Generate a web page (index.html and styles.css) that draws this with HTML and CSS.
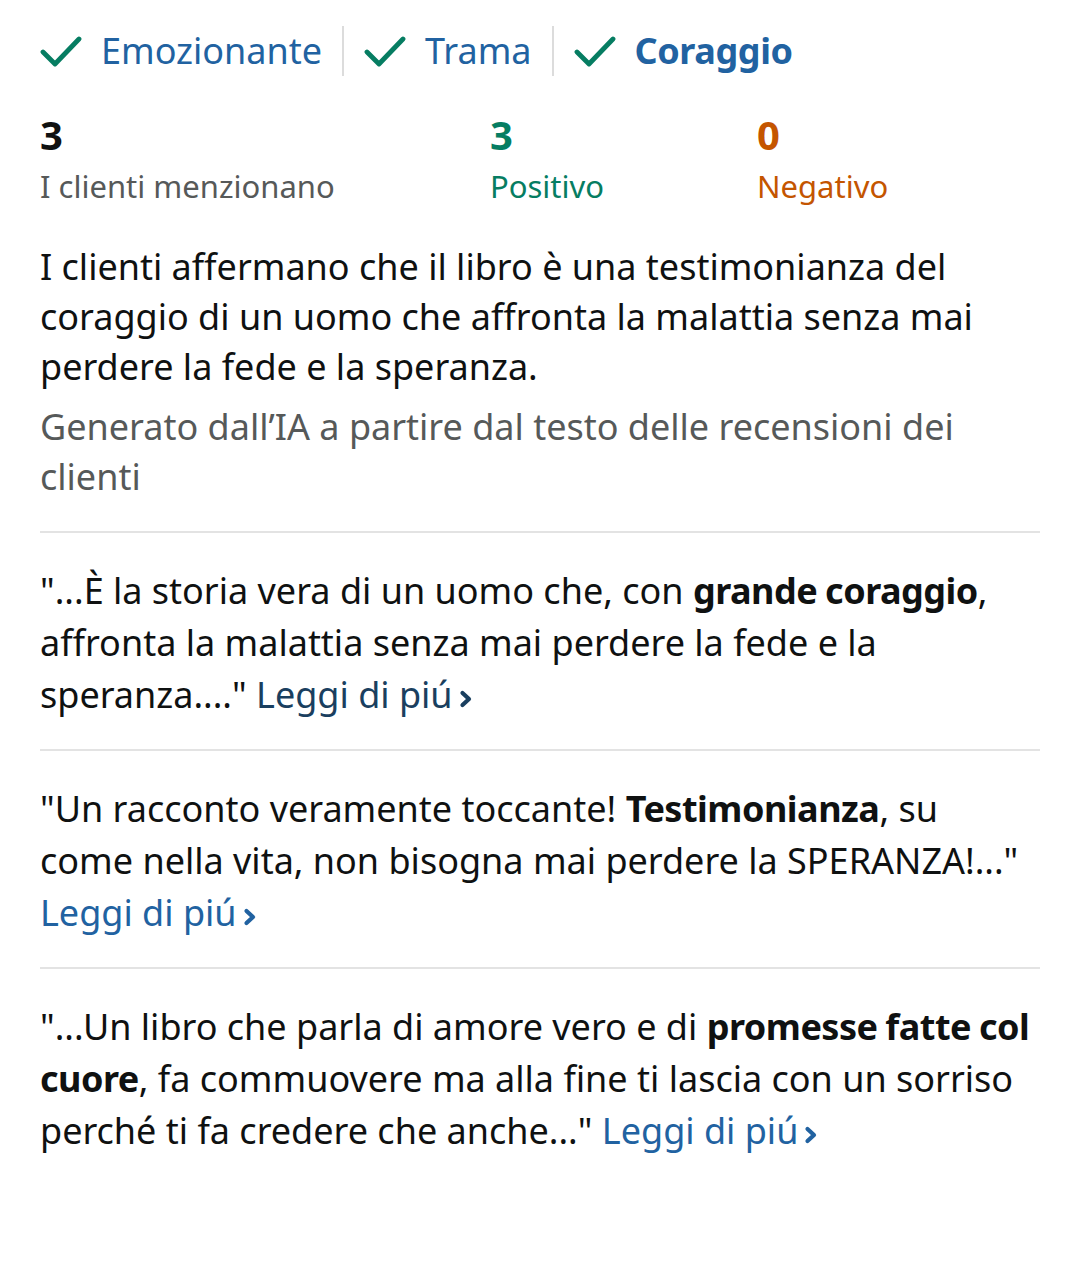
FILE: index.html
```html
<!DOCTYPE html>
<html lang="it">
<head>
<meta charset="utf-8">
<link rel="stylesheet" href="styles.css">
</head>
<body>
<div class="page">
  <div class="tags">
    <div class="tag">
      <svg class="check" viewBox="0 0 42 32" width="42" height="32"><path d="M3 17 L15 29 L39 4" fill="none" stroke="#067d62" stroke-width="4.8" stroke-linecap="round" stroke-linejoin="round"/></svg>
      <span class="tag-label">Emozionante</span>
    </div>
    <div class="sep"></div>
    <div class="tag">
      <svg class="check" viewBox="0 0 42 32" width="42" height="32"><path d="M3 17 L15 29 L39 4" fill="none" stroke="#067d62" stroke-width="4.8" stroke-linecap="round" stroke-linejoin="round"/></svg>
      <span class="tag-label">Trama</span>
    </div>
    <div class="sep"></div>
    <div class="tag">
      <svg class="check" viewBox="0 0 42 32" width="42" height="32"><path d="M3 17 L15 29 L39 4" fill="none" stroke="#067d62" stroke-width="4.8" stroke-linecap="round" stroke-linejoin="round"/></svg>
      <span class="tag-label tag-active">Coraggio</span>
    </div>
  </div>

  <div class="stats">
    <div class="stat stat-all">
      <div class="stat-num">3</div>
      <div class="stat-label">I clienti menzionano</div>
    </div>
    <div class="stat stat-pos">
      <div class="stat-num">3</div>
      <div class="stat-label">Positivo</div>
    </div>
    <div class="stat stat-neg">
      <div class="stat-num">0</div>
      <div class="stat-label">Negativo</div>
    </div>
  </div>

  <p class="summary">I clienti affermano che il libro è una testimonianza del coraggio di un uomo che affronta la malattia senza mai perdere la fede e la speranza.</p>
  <p class="ai-note">Generato dall’IA a partire dal testo delle recensioni dei clienti</p>

  <div class="quote">"...È la storia vera di un uomo che, con <b>grande coraggio</b>, affronta la malattia senza mai perdere la fede e la speranza...." <a class="more more-visited">Leggi di piú<svg class="chev" viewBox="0 0 14 20" width="14" height="20"><path d="M3.5 4 L10 10 L3.5 16" fill="none" stroke="currentColor" stroke-width="4.2" stroke-linecap="round" stroke-linejoin="round"/></svg></a></div>

  <div class="quote">"Un racconto veramente toccante! <b>Testimonianza</b>, su come nella vita, non bisogna mai perdere la SPERANZA!..." <a class="more">Leggi di piú<svg class="chev" viewBox="0 0 14 20" width="14" height="20"><path d="M3.5 4 L10 10 L3.5 16" fill="none" stroke="currentColor" stroke-width="4.2" stroke-linecap="round" stroke-linejoin="round"/></svg></a></div>

  <div class="quote">"...Un libro che parla di amore vero e di <b>promesse fatte col cuore</b>, fa commuovere ma alla fine ti lascia con un sorriso perché ti fa credere che anche..." <a class="more">Leggi di piú<svg class="chev" viewBox="0 0 14 20" width="14" height="20"><path d="M3.5 4 L10 10 L3.5 16" fill="none" stroke="currentColor" stroke-width="4.2" stroke-linecap="round" stroke-linejoin="round"/></svg></a></div>
</div>
</body>
</html>
```

FILE: styles.css
```css
html, body {
  margin: 0;
  padding: 0;
  background: #ffffff;
}
body {
  font-family: "Noto Sans", "Open Sans", sans-serif;
  color: #0f1111;
}
.page {
  padding: 26px 40px 0 40px;
}
.tags {
  display: flex;
  align-items: center;
  height: 50px;
}
.tag {
  display: flex;
  align-items: center;
  gap: 19px;
}
.check {
  display: block;
}
.tag-label {
  font-size: 36px;
  color: #2162a1;
  line-height: 50px;
}
.tag-active {
  font-weight: 700;
  letter-spacing: -0.4px;
}
.sep {
  width: 2px;
  height: 50px;
  background: #dcdcdc;
  margin: 0 20px;
}
.stats {
  display: flex;
  margin-top: 34px;
}
.stat {
  display: flex;
  flex-direction: column;
}
.stat-all { width: 450px; }
.stat-pos { width: 267px; }
.stat-num {
  font-size: 40px;
  font-weight: 700;
  line-height: 50px;
  margin-bottom: 3px;
}
.stat-label {
  font-size: 31px;
  line-height: 46px;
}
.stat-all .stat-num { color: #0f1111; }
.stat-all .stat-label { color: #565959; }
.stat-pos .stat-num, .stat-pos .stat-label { color: #067d62; }
.stat-neg .stat-num, .stat-neg .stat-label { color: #c45500; }
.summary {
  margin: 33px 0 0 0;
  font-size: 36px;
  line-height: 50px;
}
.ai-note {
  margin: 10px 0 0 0;
  font-size: 36px;
  line-height: 50px;
  color: #565959;
  padding-bottom: 29px;
  border-bottom: 2px solid #e3e3e3;
}
.quote {
  font-size: 36px;
  line-height: 52px;
  padding: 32px 0 28px 0;
  border-bottom: 2px solid #e3e3e3;
}
.quote:last-child {
  border-bottom: none;
}
.quote b {
  font-weight: 700;
  letter-spacing: -0.5px;
  word-spacing: -1px;
}
.more {
  color: #2162a1;
  text-decoration: none;
}
.more-visited {
  color: #1a3f5f;
}
.chev {
  margin-left: 6px;
  vertical-align: -1px;
}
```
